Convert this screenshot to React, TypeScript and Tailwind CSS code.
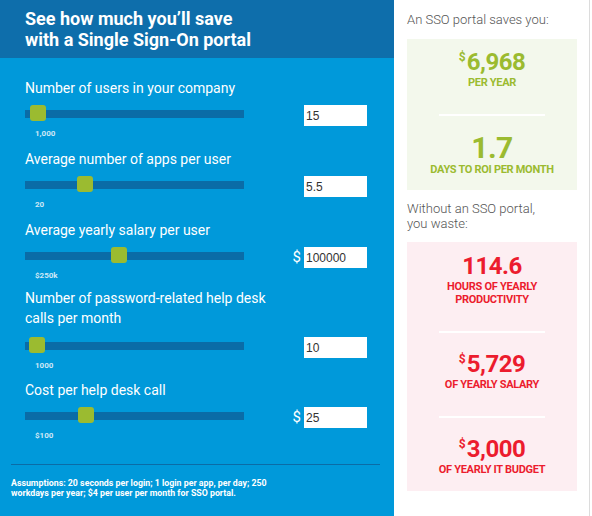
import React from 'react';

// Données des curseurs
const rows = [
  { label: 'Number of users in your company', value: '15', min: '1,000', thumb: 'left-[5px]', dollar: false },
  { label: 'Average number of apps per user', value: '5.5', min: '20', thumb: 'left-[52px]', dollar: false },
  { label: 'Average yearly salary per user', value: '100000', min: '$250k', thumb: 'left-[86px]', dollar: true },
  { label: 'Number of password-related help desk calls per month', value: '10', min: '1000', thumb: 'left-[4px]', dollar: false, wide: true },
  { label: 'Cost per help desk call', value: '25', min: '$100', thumb: 'left-[53px]', dollar: true },
];

const SliderRow: React.FC<{ row: (typeof rows)[number]; className?: string }> = ({ row, className }) => (
  <div className={className}>
    <div className="text-[14px] leading-[20px] text-white w-[250px]">{row.label}</div>
    <div className={`flex items-start h-[21px] ${row.wide ? 'mt-[9px]' : 'mt-[7px]'}`}>
      <div className="relative w-[219px] h-[8px] mt-[5px] bg-[#0a6ca7]">
        <div className={`absolute top-[-5px] ${row.thumb} w-[16px] h-[16px] rounded-[3px] bg-[#9bbb30]`} />
      </div>
      <div className="w-[60px] h-[21px] flex items-center justify-end pr-[3px] text-white text-[15px]">
        {row.dollar ? '$' : ''}
      </div>
      <div className="w-[63px] h-[21px] bg-white flex items-center pl-[2px] text-[12px] text-[#333] font-['Liberation_Sans',Arial,sans-serif]">
        {row.value}
      </div>
    </div>
    <div className="mt-[3px] pl-[10px] text-[8px] leading-[10px] font-bold text-[#cfe8f6]">{row.min}</div>
  </div>
);

const Stat: React.FC<{ value: string; dollar?: boolean; big?: boolean; label: React.ReactNode; color: string }> = ({
  value,
  dollar,
  big,
  label,
  color,
}) => (
  <div className={`flex flex-col items-center ${color}`}>
    <div className={`flex items-start justify-center font-bold ${big ? 'h-[30px]' : 'h-[28px]'}`}>
      {dollar && <span className="text-[12px] leading-[12px] mt-[3px] mr-[1px]">$</span>}
      <span className={big ? 'text-[30px] leading-[30px] tracking-[-0.5px]' : 'text-[24px] leading-[28px] tracking-[-0.5px]'}>
        {value}
      </span>
    </div>
    <div className="text-[11px] leading-[13px] font-bold text-center tracking-[-0.3px]">{label}</div>
  </div>
);

const Sep = ({ className }: { className: string }) => <div className={`w-[106px] h-[2px] bg-white mx-auto ${className}`} />;

export default function App() {
  return (
    <div className="w-[592px] h-[516px] flex bg-white font-['Roboto',sans-serif] overflow-hidden">
      <div className="w-[394px] h-full flex flex-col bg-[#0099da]">
        <div className="h-[58px] bg-[#0e6eab] px-[25px] pt-[8px] text-white font-bold text-[18px] leading-[21px]">
          See how much you’ll save
          <br />
          with a Single Sign-On portal
        </div>
        <div className="pt-[20px] px-[25px]">
          <SliderRow row={rows[0]} />
          <SliderRow row={rows[1]} className="mt-[10px]" />
          <SliderRow row={rows[2]} className="mt-[10px]" />
          <SliderRow row={rows[3]} className="mt-[7px]" />
          <SliderRow row={rows[4]} className="mt-[9px]" />
        </div>
        <div className="mx-[11px] w-[369px] h-px bg-[#0b6ca6] mt-[23px]" />
        <div className="mx-[11px] mt-[13px] text-[8.8px] leading-[10px] font-bold text-white">
          Assumptions: 20 seconds per login; 1 login per app, per day; 250
          <br />
          workdays per year; $4 per user per month for SSO portal.
        </div>
      </div>

      <div className="w-[196px] h-full border-r border-[#dcdcdc] pl-[13px] pr-[12px] pt-[12px]">
        <div className="text-[13px] leading-[16px] text-[#555] font-light">An SSO portal saves you:</div>
        <div className="mt-[11px] bg-[#f3f8ec] pt-[9px] pb-[14px]">
          <Stat value="6,968" dollar label="PER YEAR" color="text-[#9bbb30]" />
          <Sep className="mt-[25px]" />
          <div className="mt-[17px]">
            <Stat value="1.7" big label="DAYS TO ROI PER MONTH" color="text-[#9bbb30]" />
          </div>
        </div>
        <div className="mt-[11px] text-[13px] leading-[15px] text-[#555] font-light">
          Without an SSO portal,
          <br />
          you waste:
        </div>
        <div className="mt-[11px] bg-[#fdeef2] pt-[10px] pb-[15px]">
          <Stat
            value="114.6"
            label={
              <>
                HOURS OF YEARLY
                <br />
                PRODUCTIVITY
              </>
            }
            color="text-[#ec1c2e]"
          />
          <Sep className="mt-[25px]" />
          <div className="mt-[17px]">
            <Stat value="5,729" dollar label="OF YEARLY SALARY" color="text-[#ec1c2e]" />
          </div>
          <Sep className="mt-[25px]" />
          <div className="mt-[17px]">
            <Stat value="3,000" dollar label="OF YEARLY IT BUDGET" color="text-[#ec1c2e]" />
          </div>
        </div>
      </div>
    </div>
  );
}
